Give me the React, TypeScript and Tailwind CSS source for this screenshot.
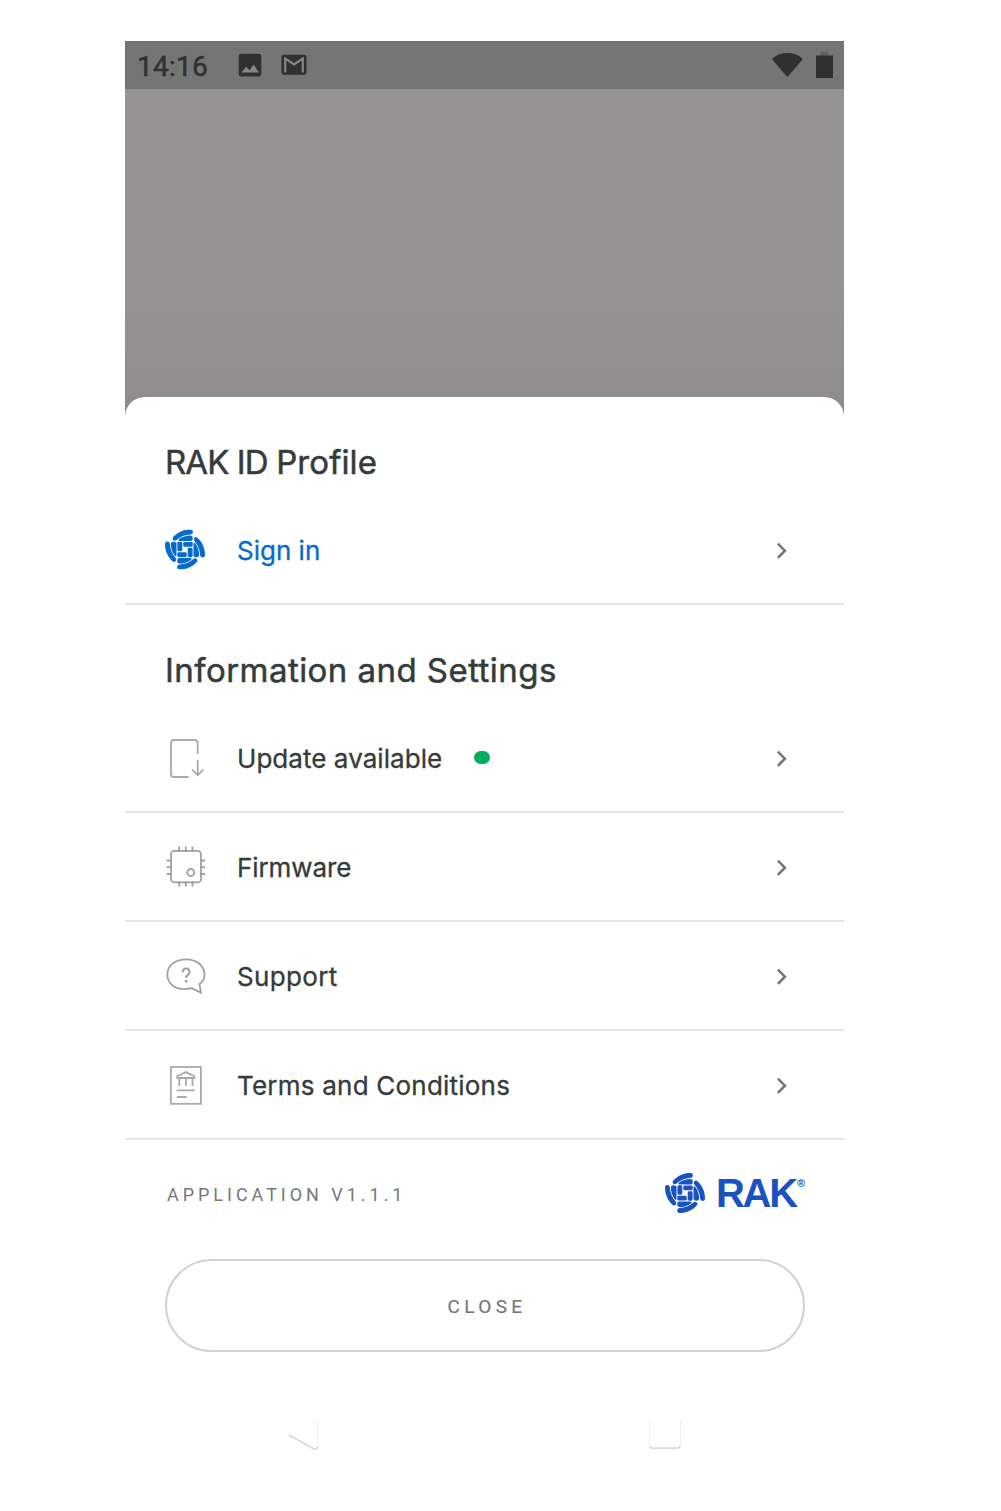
import type { ReactNode } from "react";

function Emblem() {
  return (
    <svg viewBox="-20 -20 40 40" className="block size-10 shrink-0" fill="currentColor">
      {[0, 90, 180, 270].map((r) => (
        <g key={r} transform={`rotate(${r})`}>
          <path d="M-12-12.2C-7.5-17.4-1-20 5.3-20Q7.9-20 7.9-17.6T5.5-15.1C0-14.8-4.6-13-8.3-9.5Q-9.9-8-11.6-9.2-13.2-10.5-12-12.2Z" />
          <path d="M-6.2-10.2C-2.8-13 1-14.1 6-14.1Q7.8-14.1 7.8-11.3T6-8.5H-5.8Q-7.4-9-6.2-10.2Z" />
          <rect x="-1.7" y="-7.6" width="9.4" height="4.9" rx="1.4" />
        </g>
      ))}
    </svg>
  );
}

function Chevron() {
  return (
    <svg viewBox="0 0 16 20" className="mr-[54px] h-5 w-4 shrink-0 translate-y-px" fill="none" stroke="#747474" strokeWidth="2.5">
      <path d="M3.9 2.6 10.9 9.7 3.9 16.8" />
    </svg>
  );
}

function UpdateIcon() {
  return (
    <svg viewBox="0 0 60 60" className="size-[60px] -translate-y-[3px]" fill="none" stroke="#aaa" strokeWidth="1.8">
      <path d="M42.7 29V18q0-3-3-3H19q-3 0-3 3V49q0 3 3 3h14.5M42.7 35v15M37 44.4l5.7 5.9 5.7-5.9" />
    </svg>
  );
}

function ChipIcon() {
  return (
    <svg viewBox="0 0 60 60" className="size-[60px] translate-y-[3px]" fill="none" stroke="#a0a0a0" strokeWidth="1.8">
      <rect x="16" y="10.9" width="30" height="31.5" rx="3.5" />
      <circle cx="35.8" cy="32.5" r="3.5" />
      <path d="M24.2 6.5V12M30.8 6.5V12M37.5 6.5V12M24.2 41v5.5M30.8 41v5.5M37.5 41v5.5M11.7 20.5H17M11.7 27.2H17M11.7 34H17M45 20.5h5M45 27.2h5M45 34h5" />
    </svg>
  );
}

function SupportIcon() {
  return (
    <svg viewBox="0 0 60 60" className="size-[60px] translate-y-[3px]" fill="none" stroke="#a0a0a0" strokeWidth="1.8">
      <path d="M36.7 39.2C20 42.7 12.3 34.2 12.3 25.5 12.3 16.8 20 10.3 31 10.3s18.5 6.8 18.5 15.2c0 4-1.7 7.3-5 9.5l1.4 8.6-9.2-4.4Z" />
      <path d="M27.7 23.2c.1-5 6.9-4.8 6.9-.3 0 2.8-3.5 3.2-3.5 6.2" strokeWidth="2.1" />
      <circle cx="31.1" cy="32.3" r="1.4" fill="#a0a0a0" stroke="none" />
    </svg>
  );
}

function TermsIcon() {
  return (
    <svg viewBox="0 0 60 60" className="size-[60px]" fill="none" stroke="#aaa" strokeWidth="1.8">
      <rect x="15.9" y="12" width="30" height="36.8" />
      <path d="M22.3 23v-1.8l8.6-4.1 8.6 4.1V23ZM24.3 23v8M30.9 23v8M37.5 23v8M21.8 35.3h18M21.8 42h9.8" />
    </svg>
  );
}

function Row({ icon, label, blue, dot, className, tracking }: { icon: ReactNode; label: string; blue?: boolean; dot?: boolean; className: string; tracking: string }) {
  return (
    <div className={`flex items-center border-b-2 border-[#e5e5e5] ${className}`}>
      <div className={`ml-[30px] flex size-[60px] shrink-0 items-center justify-center ${blue ? "-translate-y-[0.5px] text-[#066bcc]" : ""}`}>{icon}</div>
      <div className={`ml-[22px] flex flex-1 items-center text-[26px] leading-8 font-normal whitespace-nowrap [-webkit-text-stroke:0.3px_currentColor] ${blue ? "text-[#066bcc]" : "text-[#343b3a]"}`}>
        <span className={`translate-y-px ${dot ? "w-[205px]" : ""} ${tracking}`}>{label}</span>
        {dot && <span className="ml-8 h-[13px] w-4 -translate-y-px rounded-[7px] bg-[#00ae5b]" />}
      </div>
      <Chevron />
    </div>
  );
}

export default function App() {
  return (
    <div className="h-[1511px] w-[1001px] overflow-hidden bg-white pt-[41px] pl-[125px] font-['Inter',sans-serif]">
      <div className="w-[719px] bg-white">
        <header className="flex h-12 items-center bg-[#757575] text-[#303030]">
          <span className="ml-3 w-[101px] pt-[3px] font-['Roboto',sans-serif] text-[28px] leading-8 font-normal [-webkit-text-stroke:0.5px_currentColor] tracking-[0.25px]">14:16</span>
          <svg viewBox="0 0 24 24" className="h-6 w-6">
            <path d="M3 .8h18q2.3 0 2.3 2.3v18q0 2.3-2.3 2.3H3q-2.3 0-2.3-2.3v-18Q.7.8 3 .8Z" fill="currentColor" />
            <path d="m3.5 19.5 4.6-6 3.2 4 4.3-6 5.3 8Z" fill="#858585" />
          </svg>
          <svg viewBox="0 0 26 22" className="ml-[19px] h-[22px] w-[26px]">
            <rect x=".5" y=".8" width="25" height="20" rx="2.5" fill="currentColor" />
            <path d="M4.2 18.5V4.5l8.8 6 8.8-6v14" fill="none" stroke="#858585" strokeWidth="2.2" />
          </svg>
          <svg viewBox="0 0 32 26" className="mr-3 ml-auto h-[26px] w-8" fill="currentColor">
            <path d="M1.7 6.3C8.9-.8 23.9-.8 31.1 6.3q.7.9 0 1.7L17.4 24q-1 1-2 0L1.7 8q-.7-.8 0-1.7Z" />
          </svg>
          <svg viewBox="0 0 18 26" className="mr-[11px] h-[26px] w-[18px]">
            <path d="M5.5 0h8v4h-8Z" fill="#626262" />
            <path d="M1 3.5h17V26H1Z" fill="currentColor" />
          </svg>
        </header>

        <div className="bg-linear-to-b from-[#959393] from-60% to-[#8e8c8d] pt-[308px]">
          <div className="h-5 rounded-t-[20px] bg-white" />
        </div>

        <main className="-mt-5 pt-10">
          <h1 className="ml-10 h-[50px] text-[33px] leading-[51px] font-normal tracking-[-0.9px] text-[#343b3a] [-webkit-text-stroke:0.5px_currentColor]">
            RAK ID <span className="tracking-[0.1px]">Profile</span>
          </h1>
          <Row icon={<Emblem />} label="Sign in" blue className="h-[118px] pt-[10px]" tracking="tracking-[0px]" />
          <h2 className="mt-[40px] ml-10 h-[50px] text-[33px] leading-[51px] font-normal tracking-[0.45px] text-[#343b3a] [-webkit-text-stroke:0.5px_currentColor]">Information and Settings</h2>
          <Row icon={<UpdateIcon />} label="Update available" dot className="h-[118px] pt-[10px]" tracking="tracking-[0.05px]" />
          <Row icon={<ChipIcon />} label="Firmware" className="h-[109px]" tracking="tracking-[-0.1px]" />
          <Row icon={<SupportIcon />} label="Support" className="h-[109px]" tracking="tracking-[0.35px]" />
          <Row icon={<TermsIcon />} label="Terms and Conditions" className="h-[109px]" tracking="tracking-[0.22px]" />

          <div className="mt-[30px] flex h-[46px] items-center">
            <span className="ml-[42px] pt-[4px] font-['Roboto',sans-serif] text-[18px] leading-6 tracking-[3.97px] text-[#777]">APPLICATION V1.1.1</span>
            <div className="mr-[39px] ml-auto flex items-center text-[#1b52c1]">
              <Emblem />
              <span className="ml-[11px] w-[79px] font-['Liberation_Sans',sans-serif] text-[40px] leading-[46px] font-bold tracking-[-2.2px]">RAK</span>
              <span className="ml-[2px] -translate-y-[10px] font-['Liberation_Sans',sans-serif] text-[11px] leading-[11px] font-bold">®</span>
            </div>
          </div>

          <button className="mt-[43px] ml-10 flex h-[93px] w-[640px] items-center justify-center rounded-full border-2 border-[#d2d2d2] pt-[3px] pl-[4px] font-['Roboto',sans-serif] text-[19px] font-normal [-webkit-text-stroke:0.2px_currentColor] tracking-[4.4px] text-[#777]">CLOSE</button>
        </main>

        <nav className="mt-[64px] flex">
          <svg viewBox="0 0 36 42" className="ml-[160px] h-[42px] w-9" fill="none">
            <path d="M32.5 5V31" stroke="#eee" />
            <path d="m4 19 25 14q2.8 1 3.3-2" stroke="#dadada" strokeWidth="1.8" />
          </svg>
          <svg viewBox="0 0 36 42" className="ml-[326px] h-[42px] w-9" fill="none">
            <path d="M2.5 5v25M33.5 5v25" stroke="#f1f1f1" />
            <path d="M3 29.5q0 2.7 2.5 2.7h25q2.5 0 2.5-2.7" stroke="#dadada" strokeWidth="1.7" />
          </svg>
        </nav>
      </div>
    </div>
  );
}
